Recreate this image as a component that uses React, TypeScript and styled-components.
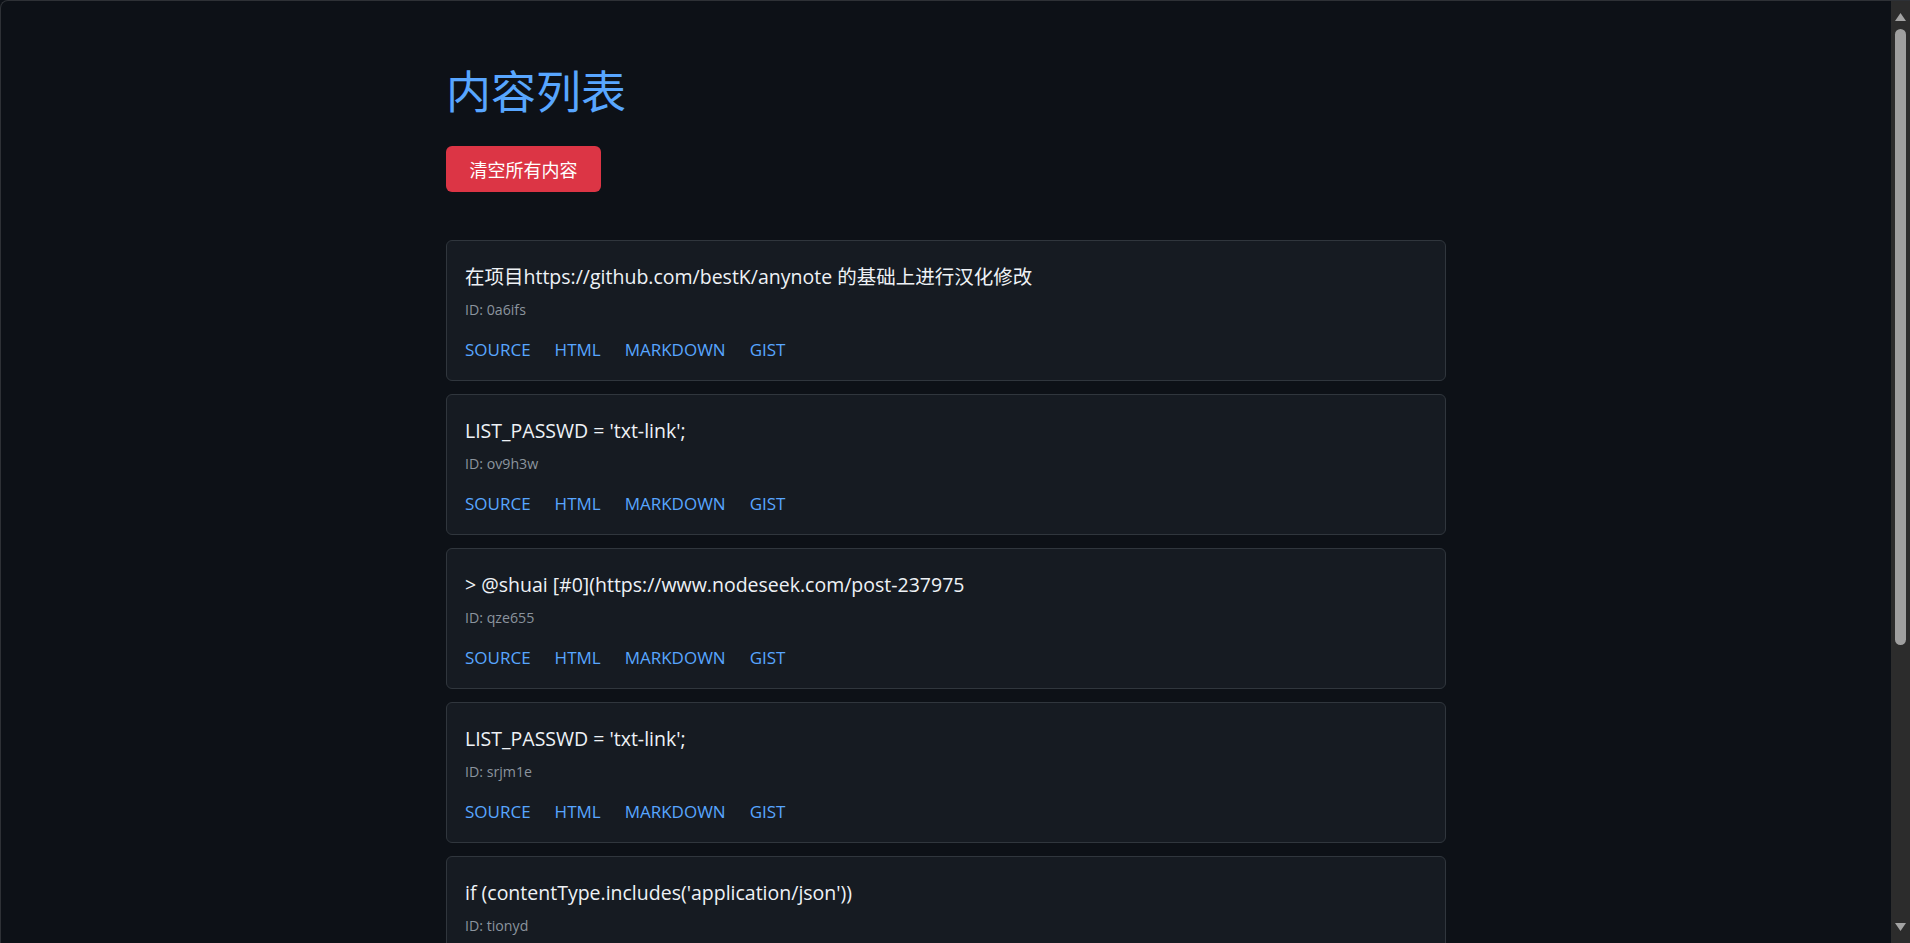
import React from "react";
import styled, { createGlobalStyle } from "styled-components";

const GlobalStyle = createGlobalStyle`
  html, body {
    margin: 0;
    background: #0d1117;
    overflow: hidden;
  }
  body {
    color: #e6edf3;
    font-family: "Open Sans", "Noto Sans CJK SC", sans-serif;
  }
`;

const Frame = styled.div`
  display: flex;
  height: 100vh;
  box-sizing: border-box;
  border-top: 1px solid #2e3136;
  border-left: 1px solid #2e3136;
  border-top-left-radius: 8px;
  background: #0d1117;
  overflow: hidden;
`;

const Viewport = styled.div`
  flex: 1;
  min-width: 0;
  overflow: hidden;
`;

const Rail = styled.div`
  width: 19px;
  flex: none;
  display: flex;
  flex-direction: column;
  background: #2c2c2c;
`;

const RailButton = styled.div<{ $down?: boolean }>`
  height: 27px;
  flex: none;
  display: flex;
  justify-content: center;
  align-items: ${(p) => (p.$down ? "flex-start" : "flex-end")};
  padding: ${(p) => (p.$down ? "7px 0 0" : "0 0 7px")};
  box-sizing: border-box;
`;

const Thumb = styled.div`
  height: 616px;
  margin: 1px 4px 0;
  border-radius: 6px;
  background: #9f9f9f;
  flex: none;
`;

const RailSpace = styled.div`
  flex: 1;
`;

const Page = styled.main`
  max-width: 1000px;
  margin: 0 auto;
  padding: 61px 0 50px;
`;

const Title = styled.h1`
  margin: 0 0 28px;
  font-family: "Noto Sans CJK SC", "Open Sans", sans-serif;
  font-size: 45px;
  line-height: 56px;
  font-weight: 400;
  color: #58a6ff;
`;

const DangerButton = styled.button`
  display: block;
  margin: 0;
  padding: 12px 23.5px;
  border: none;
  border-radius: 6px;
  background: #dc3545;
  color: #ffffff;
  font-family: "Noto Sans CJK SC", "Open Sans", sans-serif;
  font-size: 18px;
  line-height: 22px;
  cursor: pointer;
`;

const List = styled.div`
  display: flex;
  flex-direction: column;
  gap: 13px;
  margin-top: 48px;
`;

const Card = styled.section`
  background: #161b22;
  border: 1px solid #30363d;
  border-radius: 6px;
  padding: 22px 18px 18px;
`;

const CardText = styled.div`
  margin: 0 0 9px;
  font-size: 19.5px;
  line-height: 28px;
  color: #eef2f6;
  white-space: nowrap;
  overflow: hidden;
  text-overflow: ellipsis;
`;

const CardId = styled.div`
  margin: 0 0 18px;
  font-size: 14.2px;
  line-height: 20px;
  color: #8b949e;
`;

const LinkRow = styled.nav`
  display: flex;
  gap: 24px;
`;

const ActionLink = styled.a`
  color: #58a6ff;
  font-size: 17px;
  line-height: 24px;
  text-decoration: none;
`;

type Item = { id: string; text: string };

const items: Item[] = [
  { id: "0a6ifs", text: "在项目https://github.com/bestK/anynote 的基础上进行汉化修改" },
  { id: "ov9h3w", text: "LIST_PASSWD = 'txt-link';" },
  { id: "qze655", text: "> @shuai [#0](https://www.nodeseek.com/post-237975" },
  { id: "srjm1e", text: "LIST_PASSWD = 'txt-link';" },
  { id: "tionyd", text: "if (contentType.includes('application/json'))" },
  { id: "w3k8pa", text: "测试内容" },
  { id: "x7b2qm", text: "hello world" },
];

const actions = ["SOURCE", "HTML", "MARKDOWN", "GIST"];

function Arrow({ down }: { down?: boolean }) {
  return (
    <svg width="11" height="8" viewBox="0 0 11 8" aria-hidden="true">
      <polygon
        points={down ? "0,0 11,0 5.5,8" : "5.5,0 11,8 0,8"}
        fill="#a3a3a3"
      />
    </svg>
  );
}

export default function App() {
  return (
    <>
      <GlobalStyle />
      <Frame>
        <Viewport>
          <Page>
            <Title>内容列表</Title>
            <DangerButton type="button">清空所有内容</DangerButton>
            <List>
              {items.map((item) => (
                <Card key={item.id}>
                  <CardText>{item.text}</CardText>
                  <CardId>ID: {item.id}</CardId>
                  <LinkRow>
                    {actions.map((a) => (
                      <ActionLink key={a} href="#">
                        {a}
                      </ActionLink>
                    ))}
                  </LinkRow>
                </Card>
              ))}
            </List>
          </Page>
        </Viewport>
        <Rail aria-hidden="true">
          <RailButton>
            <Arrow />
          </RailButton>
          <Thumb />
          <RailSpace />
          <RailButton $down>
            <Arrow down />
          </RailButton>
        </Rail>
      </Frame>
    </>
  );
}
